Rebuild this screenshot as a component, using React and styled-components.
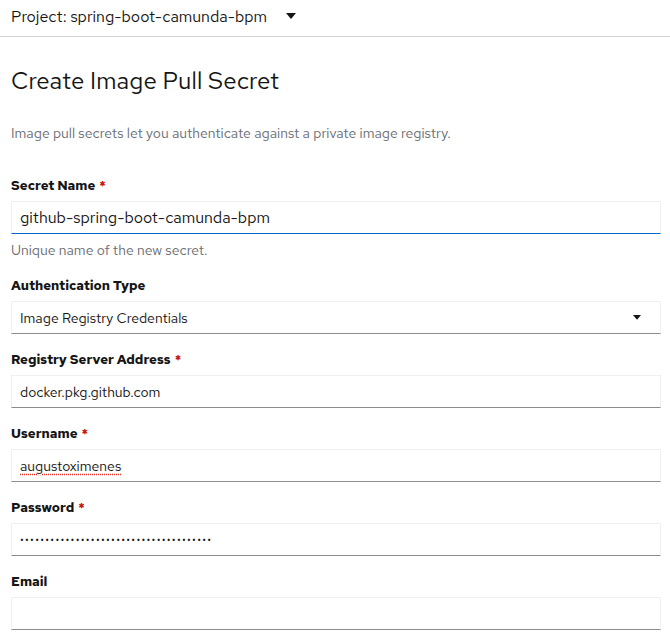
import React from 'react';
import styled, { createGlobalStyle } from 'styled-components';

const GlobalStyle = createGlobalStyle`
  html, body {
    margin: 0;
    padding: 0;
    background: #fff;
  }
  body {
    font-family: 'Red Hat Text', Lato, 'Noto Sans', sans-serif;
    color: #151515;
  }
`;

const Page = styled.div`
  width: 670px;
  min-height: 637px;
  overflow: hidden;
`;

const ProjectBar = styled.div`
  height: 37px;
  border-bottom: 1px solid #d2d2d2;
  padding: 0 11px 4px;
  display: flex;
  align-items: center;
  box-sizing: border-box;
  font-size: 16px;
`;

const Caret = styled.svg`
  margin-left: ${(p) => p.$gap || 0}px;
  flex: none;
`;

const Main = styled.div`
  padding: 0 9px 0 11px;
`;

const Title = styled.h1`
  margin: 28px 0 0;
  font-size: 24px;
  line-height: 32px;
  font-weight: 400;
  letter-spacing: 0.1px;
`;

const Description = styled.p`
  margin: 26px 0 0;
  font-size: 14px;
  line-height: 20px;
  color: #6a6e73;
`;

const Form = styled.div`
  margin-top: 32px;
  display: flex;
  flex-direction: column;
  gap: 15px;
`;

const Group = styled.div`
  display: flex;
  flex-direction: column;
`;

const Label = styled.div`
  font-size: 13.3px;
  line-height: 20px;
  font-weight: 700;
  margin-bottom: 6px;
`;

const Required = styled.span`
  color: #c9190b;
  margin-left: 4px;
`;

const Box = styled.div`
  height: 33px;
  box-sizing: border-box;
  border: 1px solid #f0f0f0;
  border-bottom: 1px solid ${(p) => (p.$focused ? '#0066cc' : '#8a8d90')};
  padding: 0 ${(p) => (p.$select ? 19 : 8)}px 0 8px;
  display: flex;
  align-items: center;
  justify-content: space-between;
  font-size: ${(p) => (p.$large ? 16 : 14)}px;
`;

const Misspelled = styled.span`
  text-decoration: underline dotted #e0332a;
  text-underline-offset: 3px;
`;

const Dots = styled.span`
  font-size: 11px;
  letter-spacing: 1.3px;
`;

const Helper = styled.div`
  margin-top: 6px;
  font-size: 14px;
  line-height: 20px;
  color: #6a6e73;
`;

const TriangleDown = ({ gap, size = 10 }) => (
  <Caret $gap={gap} width={size} height={size * 0.6} viewBox="0 0 10 6">
    <path d="M0 0 H10 L5 6 Z" fill="#151515" />
  </Caret>
);

const Field = ({ label, required, children, helper, focused, large, select }) => (
  <Group>
    <Label>
      {label}
      {required && <Required>*</Required>}
    </Label>
    <Box $focused={focused} $large={large} $select={select}>
      {children}
    </Box>
    {helper && <Helper>{helper}</Helper>}
  </Group>
);

export default function App() {
  return (
    <Page>
      <GlobalStyle />
      <ProjectBar>
        Project: spring-boot-camunda-bpm
        <TriangleDown gap={19} />
      </ProjectBar>
      <Main>
        <Title>Create Image Pull Secret</Title>
        <Description>
          Image pull secrets let you authenticate against a private image registry.
        </Description>
        <Form>
          <Field
            label="Secret Name"
            required
            focused
            large
            helper="Unique name of the new secret."
          >
            github-spring-boot-camunda-bpm
          </Field>
          <Field label="Authentication Type" select>
            Image Registry Credentials
            <TriangleDown size={8} />
          </Field>
          <Field label="Registry Server Address" required>
            docker.pkg.github.com
          </Field>
          <Field label="Username" required>
            <Misspelled>augustoximenes</Misspelled>
          </Field>
          <Field label="Password" required>
            <Dots>{'•'.repeat(38)}</Dots>
          </Field>
          <Field label="Email" />
        </Form>
      </Main>
    </Page>
  );
}
